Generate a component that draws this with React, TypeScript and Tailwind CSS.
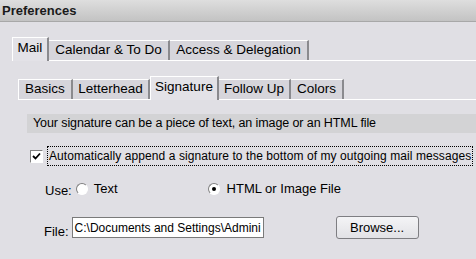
import React from "react";

const font = { fontFamily: '"Liberation Sans", Arial, sans-serif' };

function Tab({ label, selected, first, w }: { label: string; selected?: boolean; first?: boolean; w: string }) {
  if (selected) {
    return (
      <div
        className={
          "relative z-10 -mb-px flex h-[24px] items-center justify-center border-l border-t border-white border-r-2 border-r-[#8a8a8e] bg-[#e3e2e7] pb-[2px] text-[13.5px] text-black " +
          w
        }
      >
        {label}
      </div>
    );
  }
  return (
    <div
      className={
        "flex h-[20px] items-center justify-center border-t border-white border-r-2 border-r-[#8a8a8e] bg-[#d6d5db] text-[13.5px] text-black " +
        (first ? "border-l " : "") +
        w
      }
    >
      {label}
    </div>
  );
}

export default function App() {
  return (
    <div className="h-[259px] w-[476px] overflow-hidden bg-[#e0dfe4] text-black" style={font}>
      <div className="flex h-[22px] items-center border-b border-[#a8a8a8] bg-gradient-to-b from-[#dedede] to-[#c3c3c3] pl-[2px] text-[13px] font-bold text-[#1a1a1a]">
        Preferences
      </div>
      <div className="pl-[12px] pt-[15px]">
        <div className="flex h-[24px] items-end border-b border-white">
          <Tab label="Mail" selected w="w-[37px]" />
          <Tab label="Calendar & To Do" w="w-[121px]" />
          <Tab label="Access & Delegation" w="w-[139px]" />
        </div>
      </div>
      <div className="pl-[18px] pt-[17px]">
        <div className="flex h-[22px] items-end border-b border-white">
          <Tab label="Basics" first w="w-[55px]" />
          <Tab label="Letterhead" w="w-[77px]" />
          <Tab label="Signature" selected w="w-[69px]" />
          <Tab label="Follow Up" w="w-[72px]" />
          <Tab label="Colors" w="w-[53px]" />
        </div>
      </div>
      <div className="ml-[27px] mt-[14px] flex h-[19px] items-center bg-[#d3d3d5] pl-[6px] text-[12.5px] tracking-[-0.1px]">
        Your signature can be a piece of text, an image or an HTML file
      </div>
      <div className="ml-[30px] mt-[13px] flex items-center">
        <div className="flex h-[13px] w-[13px] items-center justify-center border border-t-[#808080] border-l-[#808080] border-r-white border-b-white bg-white">
          <svg width="9" height="9" viewBox="0 0 9 9">
            <path d="M1 4 L3.5 6.5 L8 1.5" stroke="#000" strokeWidth="1.8" fill="none" />
          </svg>
        </div>
        <div className="ml-[4px] whitespace-nowrap border border-dotted border-black px-[1px] text-[12px] leading-[18px] tracking-[0.08px]">
          Automatically append a signature to the bottom of my outgoing mail messages
        </div>
      </div>
      <div className="ml-[45px] mt-[15px] flex h-[16px] items-center text-[13px]">
        <span className="mt-[3px]">Use:</span>
        <span className="ml-[4px] h-[12px] w-[12px] shrink-0 rounded-full border border-t-[#808080] border-l-[#808080] border-r-white border-b-white bg-white" />
        <span className="ml-[6px]">Text</span>
        <span className="ml-[90px] flex h-[12px] w-[12px] shrink-0 items-center justify-center rounded-full border border-t-[#808080] border-l-[#808080] border-r-white border-b-white bg-white">
          <span className="h-[4px] w-[4px] rounded-full bg-black" />
        </span>
        <span className="ml-[7px]">HTML or Image File</span>
      </div>
      <div className="ml-[44px] mt-[17px] flex items-center text-[13px]">
        <span className="mt-[8px]">File:</span>
        <div className="ml-[3px] flex h-[21px] w-[192px] items-center overflow-hidden whitespace-nowrap border border-[#7a7a7a] bg-white pl-[2px] text-[12px]">
          C:\Documents and Settings\Admini
        </div>
        <button className="ml-[72px] flex h-[23px] w-[83px] items-center justify-center rounded-[3px] border border-[#7e7e82] bg-gradient-to-b from-[#f4f4f6] to-[#e2e2e6] text-[13px]">
          Browse...
        </button>
      </div>
    </div>
  );
}
